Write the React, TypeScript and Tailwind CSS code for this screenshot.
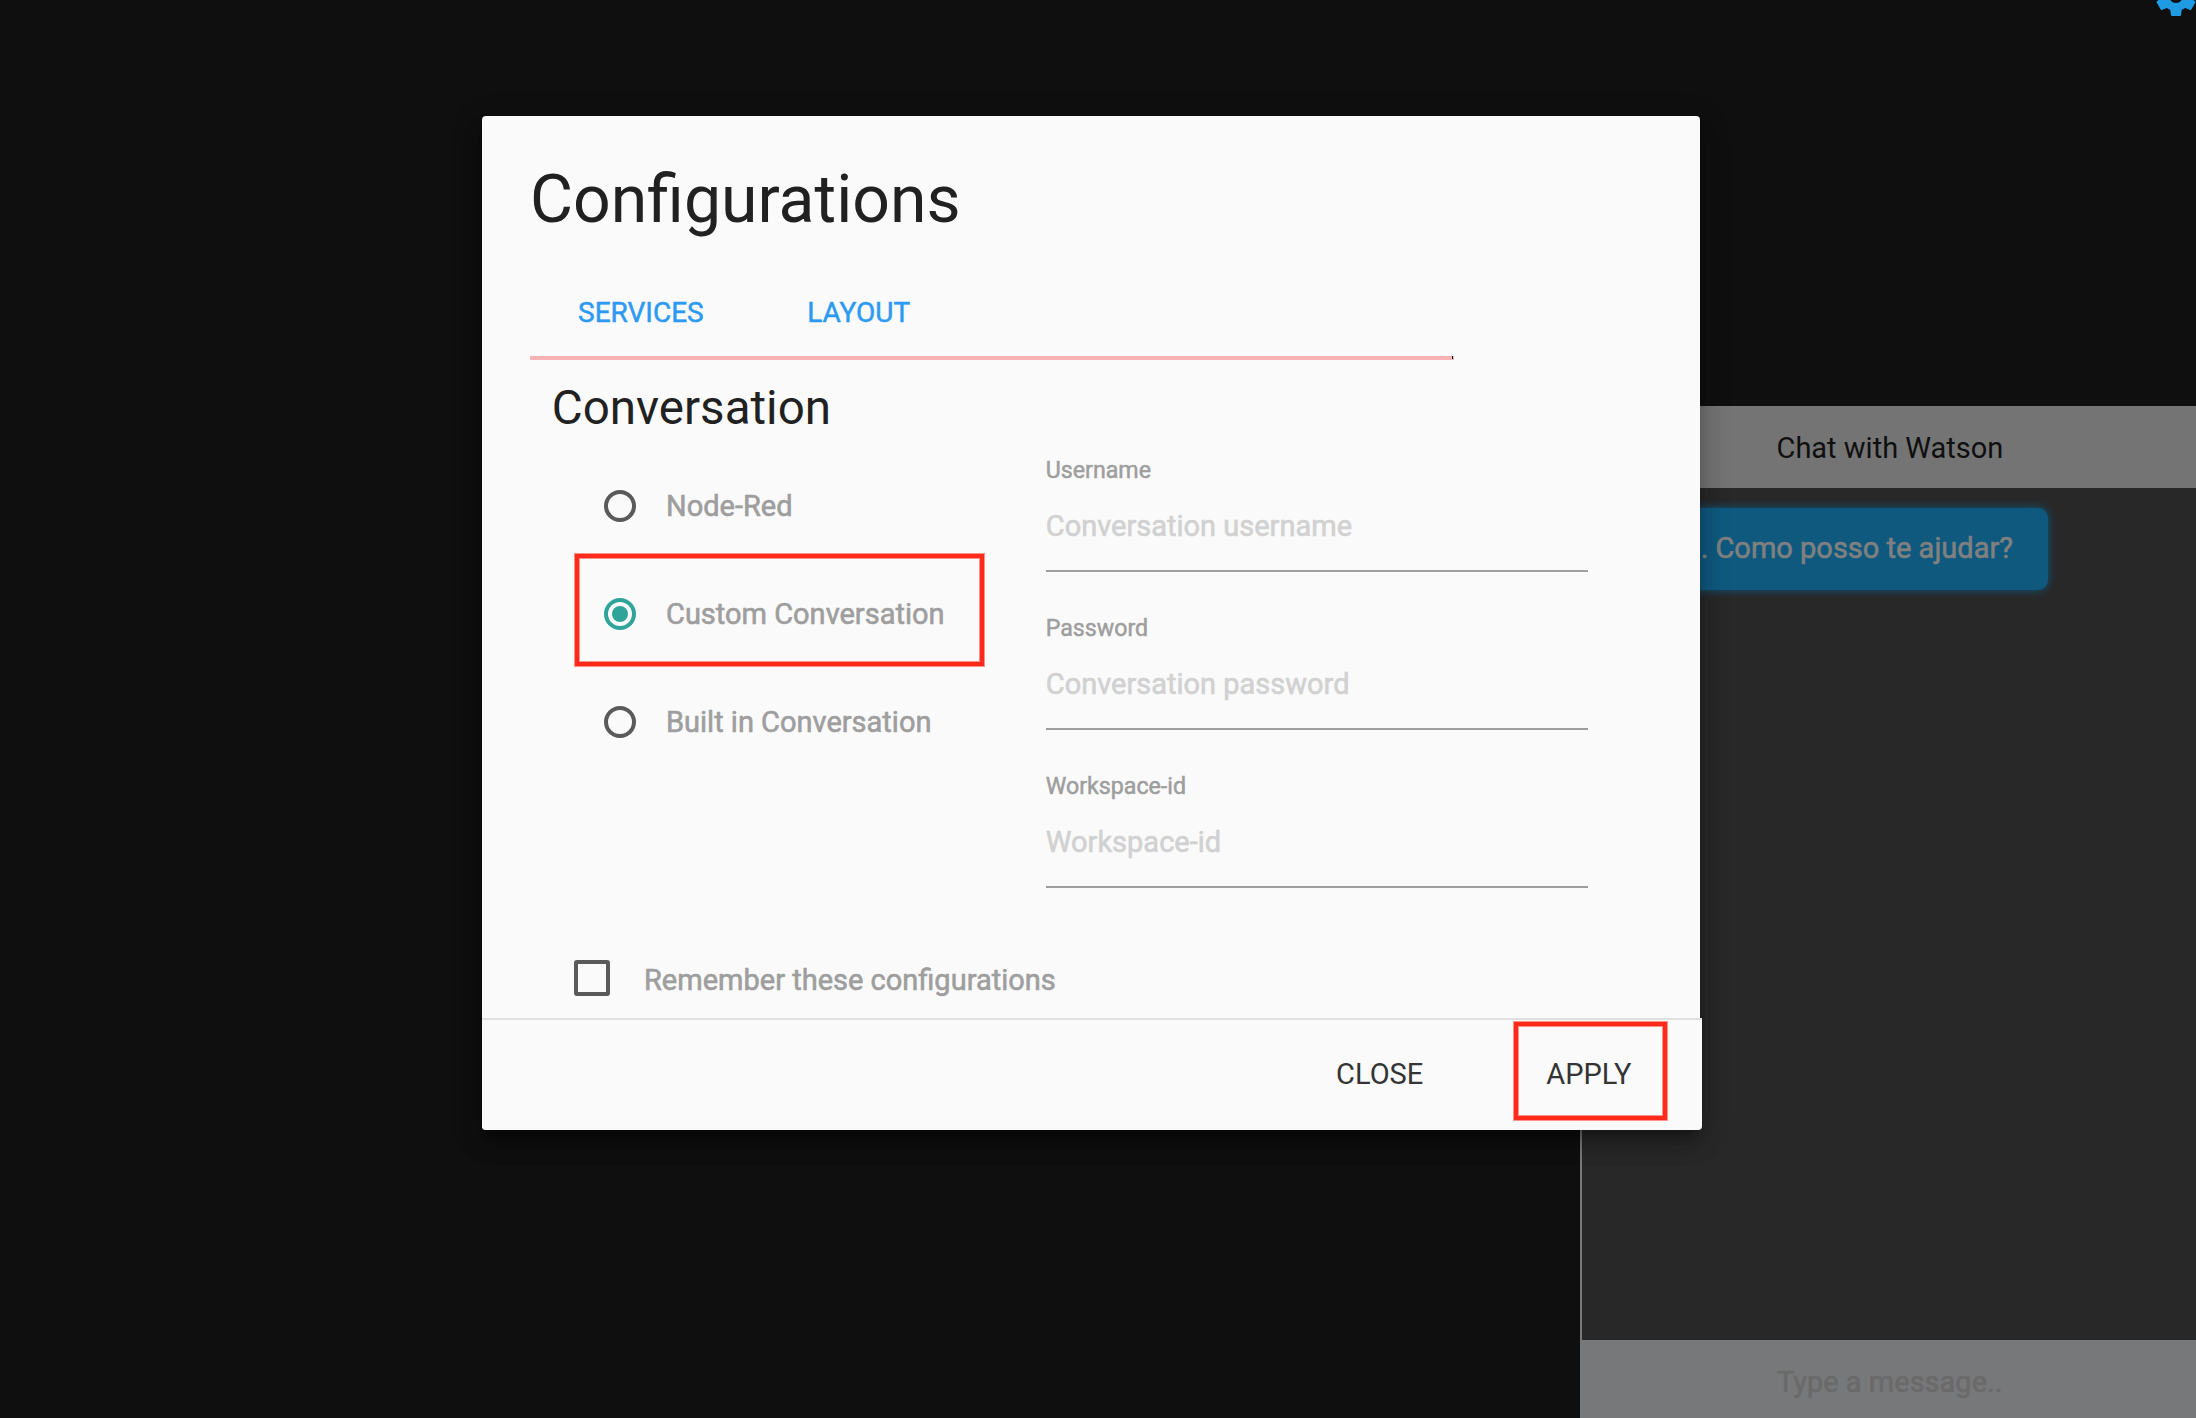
const GearIcon = () => (
  <svg viewBox="0 0 24 24" className="size-12 fill-[#1f9be4]">
    <path d="M19.43 12.98c.04-.32.07-.64.07-.98s-.03-.66-.07-.98l2.11-1.65c.19-.15.24-.42.12-.64l-2-3.46c-.12-.22-.39-.3-.61-.22l-2.49 1c-.52-.4-1.08-.73-1.69-.98l-.38-2.65C14.46 2.18 14.25 2 14 2h-4c-.25 0-.46.18-.49.42l-.38 2.65c-.61.25-1.17.59-1.69.98l-2.49-1c-.23-.09-.49 0-.61.22l-2 3.46c-.13.22-.07.49.12.64l2.11 1.65c-.04.32-.07.65-.07.98s.03.66.07.98l-2.11 1.65c-.19.15-.24.42-.12.64l2 3.46c.12.22.39.3.61.22l2.49-1c.52.4 1.08.73 1.69.98l.38 2.65c.03.24.24.42.49.42h4c.25 0 .46-.18.49-.42l.38-2.65c.61-.25 1.17-.59 1.69-.98l2.49 1c.23.09.49 0 .61-.22l2-3.46c.12-.22.07-.49-.12-.64l-2.11-1.65zM12 15.5c-1.93 0-3.5-1.57-3.5-3.5s1.57-3.5 3.5-3.5 3.5 1.57 3.5 3.5-1.57 3.5-3.5 3.5z" />
  </svg>
);

const options = [
  { label: "Node-Red", selected: false },
  { label: "Custom Conversation", selected: true },
  { label: "Built in Conversation", selected: false },
];

const fields = [
  { label: "Username", placeholder: "Conversation username" },
  { label: "Password", placeholder: "Conversation password" },
  { label: "Workspace-id", placeholder: "Workspace-id" },
];

const Radio = ({ label, selected }: { label: string; selected: boolean }) => (
  <div className="relative flex h-8 items-center">
    <span
      className={
        selected
          ? "flex size-8 items-center justify-center rounded-full border-4 border-[#2fa59a]"
          : "size-8 rounded-full border-4 border-[#5a5a5a]"
      }
    >
      {selected && <span className="size-4 rounded-full bg-[#2fa59a]" />}
    </span>
    <span className="ml-[30px] leading-8 whitespace-nowrap text-[#9e9e9e] [-webkit-text-stroke:0.6px_#9e9e9e]">{label}</span>
    {selected && (
      <span className="absolute -top-11 -left-[29px] h-28 w-[409px] border-4 border-[#ff2a1c] shadow-[0_0_0_1px_#ff2a1c80,inset_0_0_0_1px_#ff2a1c80]" />
    )}
  </div>
);

const Field = ({ label, placeholder }: { label: string; placeholder: string }) => (
  <div className="h-[158px]">
    <div className="pt-0.5 text-[23.2px] leading-7 text-[#9e9e9e] [-webkit-text-stroke:0.5px_#9e9e9e]">{label}</div>
    <div className="mt-3.5 h-[74px] border-b-2 border-[#9e9e9e] text-[#d1d1d1] [-webkit-text-stroke:0.6px_#d1d1d1]">
      <div className="pt-3 leading-8">{placeholder}</div>
    </div>
  </div>
);

const ChatPanel = () => (
  <aside className="flex w-[616px] flex-col border-l-2 border-[#7a7a7b] bg-[#282828]">
    <header className="-ml-0.5 h-[82px] bg-[#747474] pt-[26px] pl-[196.5px] leading-8 text-[#0f0f0f]">
      Chat with Watson
    </header>
    <div className="flex-1 pt-5 pr-[148px]">
      <div className="ml-auto h-[82px] w-[440px] rounded-[10px] bg-[#0f597f] pt-6 pr-[35px] text-right leading-8 text-[#808080] shadow-[0_0_10px_#0f597f] [-webkit-text-stroke:0.6px_#808080]">
        . Como posso te ajudar?
      </div>
    </div>
    <footer className="-ml-0.5 h-[78px] bg-[#777879] pt-[26px] pl-[197px] leading-8 text-[#6a6a6a] [-webkit-text-stroke:0.6px_#6a6a6a]">
      Type a message..
    </footer>
  </aside>
);

const ConfigModal = () => (
  <section className="absolute top-[116px] left-[482px] flex h-[1014px] w-[1218px] flex-col rounded bg-[#fafafa] shadow-[0_16px_20px_2px_rgba(0,0,0,.14),0_6px_28px_4px_rgba(0,0,0,.16),0_10px_10px_-6px_rgba(0,0,0,.3)]">
    <div className="h-[902px] px-12 pt-12">
      <h1 className="h-[108px] text-[66.12px] leading-[72px] text-[#212121]">Configurations</h1>
      <nav className="relative flex h-[88px] w-[924px] items-start border-b-4 border-[#f6b2b5] text-[28px] text-[#2d9af1] [-webkit-text-stroke:0.5px_#2d9af1]">
        <a className="pt-[25px] pl-12 leading-8">SERVICES</a>
        <a className="pt-[25px] pl-[103.5px] leading-8">LAYOUT</a>
        <span className="absolute right-px -bottom-[3px] h-[3px] w-px bg-black" />
      </nav>
      <div className="px-[21.75px] pt-[22px]">
        <h2 className="h-[51px] text-[47.56px] leading-[52px] text-[#212121]">Conversation</h2>
        <div className="flex">
          <div className="flex w-[494px] flex-col gap-[76px] pt-[57px] pl-[52.25px]">
            {options.map((o) => (
              <Radio key={o.label} {...o} />
            ))}
          </div>
          <div className="w-[542px] pt-[21px]">
            {fields.map((f) => (
              <Field key={f.label} {...f} />
            ))}
          </div>
        </div>
        <div className="flex pt-[32px] pl-[22.25px]">
          <span className="size-9 shrink-0 rounded-[3px] border-4 border-[#5a5a5a]" />
          <span className="ml-[34px] pt-1 leading-8 text-[#9e9e9e] [-webkit-text-stroke:0.6px_#9e9e9e]">
            Remember these configurations
          </span>
        </div>
      </div>
    </div>
    <footer className="relative flex h-28 w-[1220px] justify-end rounded-b border-t-2 border-[#e0e0e0] bg-[#fafafa] pr-[70.5px] text-[#343434]">
      <button className="mt-[38px] h-8 leading-8">CLOSE</button>
      <button className="mt-[38px] ml-[123px] h-8 leading-8">APPLY</button>
      <span className="absolute top-0.5 right-[35px] h-[98px] w-[153px] border-4 border-[#ff2a1c] shadow-[0_0_0_1px_#ff2a1c80,inset_0_0_0_1px_#ff2a1c80]" />
    </footer>
  </section>
);

export default function App() {
  return (
    <main className="relative flex h-[1418px] w-[2196px] justify-end overflow-hidden bg-[#0f0f0f] pt-[406px] font-[Roboto,sans-serif] text-[29px]">
      <div className="absolute -top-7 left-[2152px]">
        <GearIcon />
      </div>
      <ChatPanel />
      <ConfigModal />
    </main>
  );
}
